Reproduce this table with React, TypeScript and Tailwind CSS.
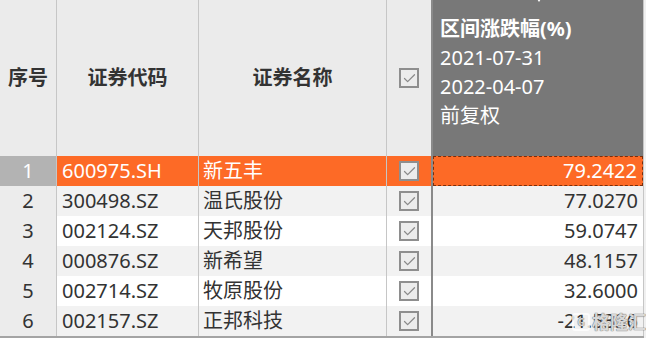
import { Check } from 'lucide-react';

type Row = { idx: number; code: string; name: string; change: string };

const rows: Row[] = [
  { idx: 1, code: '600975.SH', name: '新五丰', change: '79.2422' },
  { idx: 2, code: '300498.SZ', name: '温氏股份', change: '77.0270' },
  { idx: 3, code: '002124.SZ', name: '天邦股份', change: '59.0747' },
  { idx: 4, code: '000876.SZ', name: '新希望', change: '48.1157' },
  { idx: 5, code: '002714.SZ', name: '牧原股份', change: '32.6000' },
  { idx: 6, code: '002157.SZ', name: '正邦科技', change: '-21.5336' },
];

const font = "font-['Noto_Sans','Noto_Sans_CJK_SC',sans-serif]";

function Box() {
  return (
    <span className="flex h-[20px] w-[20px] items-center justify-center border-2 border-[#8e8e8e] bg-[#ececec]">
      <Check size={15} strokeWidth={2} className="text-[#8a8a8a]" />
    </span>
  );
}

export default function App() {
  return (
    <div className={`relative h-[338px] w-[646px] overflow-hidden bg-[#f0f0f0] ${font}`}>
      {/* header */}
      <div className="flex h-[156px] w-[644px] bg-[#ebebeb] text-[20px] font-bold text-[#333]">
        <div className="flex w-[57px] items-center justify-center border-r border-[#c6c6c6]">序号</div>
        <div className="flex w-[142px] items-center justify-center border-r border-[#c6c6c6]">证券代码</div>
        <div className="flex w-[188px] items-center justify-center border-r border-[#c6c6c6]">证券名称</div>
        <div className="flex w-[46px] items-center justify-center border-r-2 border-[#8a8a8a]">
          <Box />
        </div>
        <div className="relative w-[211px] border-r border-[#c6c6c6] bg-[#787878] pl-[7px] pt-[14px] text-white">
          <span className="absolute left-[102px] top-[-4px] h-0 w-0 border-x-[4px] border-t-[6px] border-x-transparent border-t-white" />
          <div className="leading-[29px]">区间涨跌幅(%)</div>
          <div className="font-normal leading-[29px]">2021-07-31</div>
          <div className="font-normal leading-[29px]">2022-04-07</div>
          <div className="font-normal leading-[29px]">前复权</div>
        </div>
      </div>

      {/* body */}
      <div className="w-[644px] border-b-2 border-[#a4a4a4] text-[20px] text-[#333]">
        {rows.map((r) => {
          const sel = r.idx === 1;
          const stripe = r.idx % 2 === 0 ? 'bg-[#f2f2f2]' : 'bg-white';
          return (
            <div key={r.idx} className={`flex h-[30px] ${sel ? 'bg-[#fd6a26] text-white' : stripe}`}>
              <div
                className={`flex w-[57px] items-center justify-center border-r border-[#c6c6c6] ${
                  sel ? 'bg-[#b3b3b3] text-white' : 'bg-[#ececec]'
                }`}
              >
                {r.idx}
              </div>
              <div className="flex w-[142px] items-center border-r border-[#c6c6c6] pl-[5px]">{r.code}</div>
              <div className="flex w-[188px] items-center border-r border-[#c6c6c6] pl-[4px]">{r.name}</div>
              <div className="flex w-[46px] items-center justify-center border-r-2 border-[#8a8a8a]">
                <Box />
              </div>
              <div className="w-[211px] border-r border-[#c6c6c6]">
                <div
                  className={`flex h-full items-center justify-end pr-[5px] ${
                    sel ? 'border border-dashed border-[#7a2e0a]' : ''
                  }`}
                >
                  {r.change}
                </div>
              </div>
            </div>
          );
        })}
      </div>

      {/* watermark */}
      <div className="absolute left-[572px] top-[311px] flex items-center gap-[2px] text-[18px] font-bold leading-[22px] text-white/75 [text-shadow:0_0_1px_#666,0_0_1px_#666]">
        <span className="flex h-[18px] w-[18px] items-center justify-center rounded-[3px] border-2 border-white/75 text-[10px] leading-none">G</span>
        <span>格隆汇</span>
      </div>
    </div>
  );
}
